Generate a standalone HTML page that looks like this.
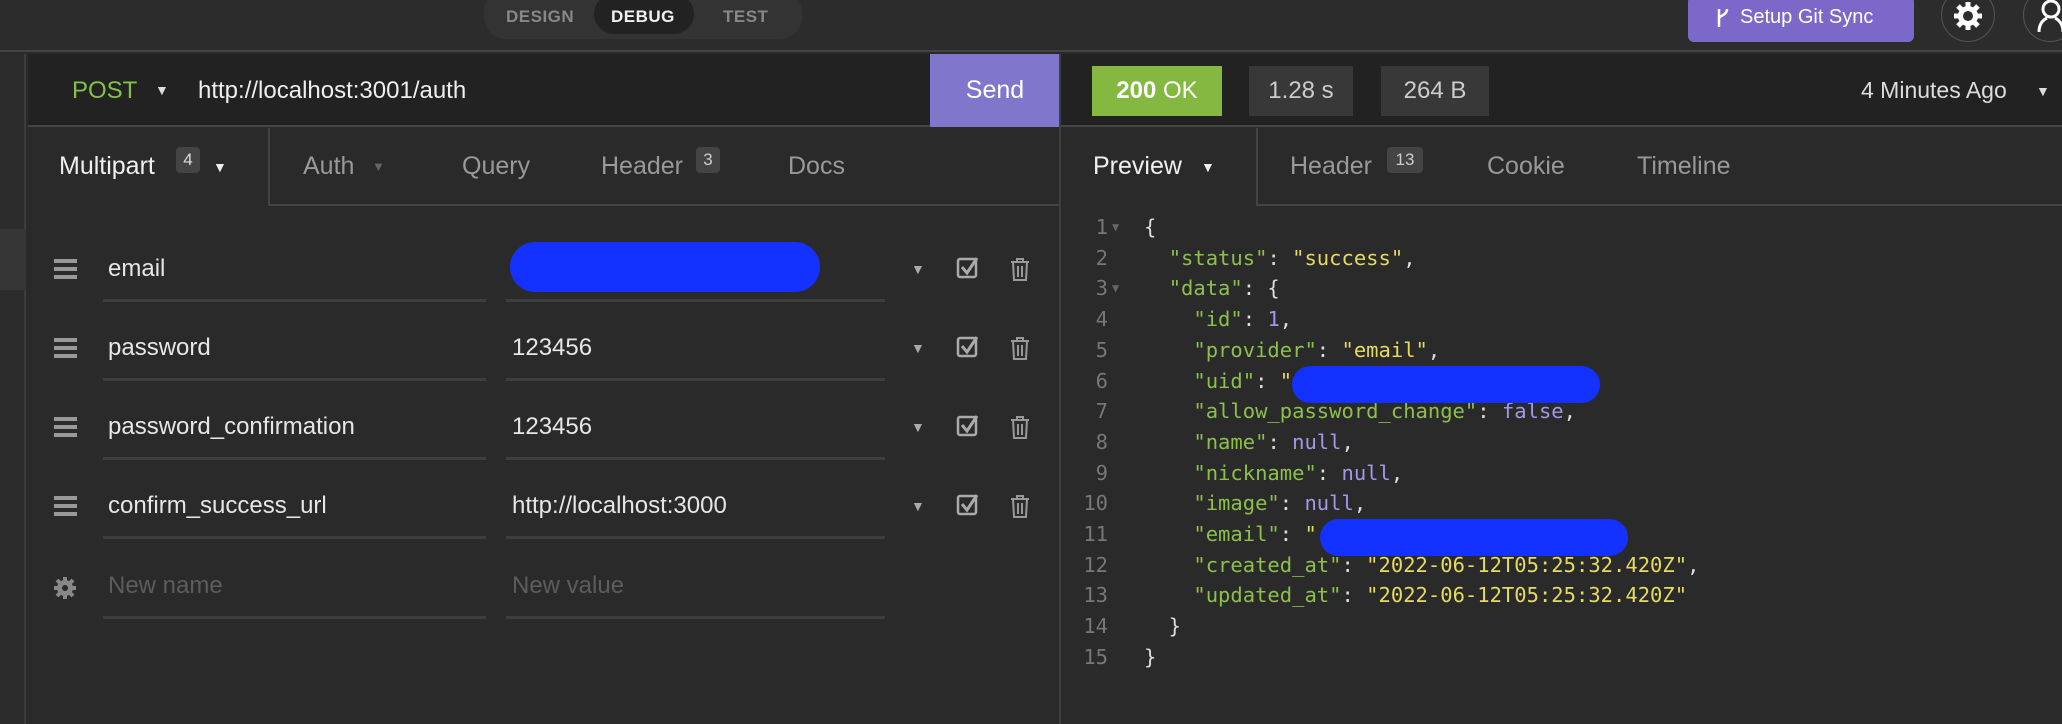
<!DOCTYPE html>
<html><head><meta charset="utf-8"><style>
*{box-sizing:border-box;margin:0;padding:0}
body{width:2062px;height:724px;background:#2a2a2a;font-family:"Liberation Sans",sans-serif;color:#ddd;position:relative;overflow:hidden}
.a{position:absolute}
.top{left:0;top:0;width:2062px;height:52px;background:#2c2c2c;border-bottom:2px solid #444}
.pill{left:484px;top:-10px;width:318px;height:49px;background:#333;border-radius:22px}
.pt{font-size:17px;font-weight:bold;color:#888;top:7px;letter-spacing:.5px}
.mono{font-family:"DejaVu Sans Mono","Liberation Mono",monospace}
.tabtxt{font-size:25px;color:#999;top:152px}
.lbl{font-size:24px;color:#e6e6e6}
.ul{height:3px;background:#3e3e3e}
.k{color:#8cc04a}.s{color:#e5db62}.n{color:#a397e6}.p{color:#ddd}
.ln{color:#777;text-align:right;width:40px}
.dd{font-size:14px;color:#aaa;left:911px}
</style></head><body>
<div class="a top"></div>
<div class="a pill"></div>
<div class="a" style="left:594px;top:-6px;width:100px;height:40px;background:#222;border-radius:20px"></div>
<div class="a pt" style="left:506px">DESIGN</div>
<div class="a pt" style="left:611px;color:#f0f0f0">DEBUG</div>
<div class="a pt" style="left:723px">TEST</div>
<div class="a" style="left:1688px;top:-4px;width:226px;height:46px;background:#7c68c8;border-radius:6px;color:#fff;font-size:20px;padding:10px 0 0 30px">
<svg width="14" height="22" style="position:absolute;left:28px;top:11px" viewBox="0 0 14 22"><path d="M3 2v18M3 12c0-4 8-3 8-10" stroke="#fff" stroke-width="2.5" fill="none"/></svg>
<span style="margin-left:22px">Setup Git Sync</span></div>
<div class="a" style="left:1941px;top:-12px;width:54px;height:54px;border:1.5px solid #555;border-radius:50%"></div>
<svg class="a" style="left:1953px;top:1px" width="30" height="30" viewBox="0 0 30 30"><g stroke="#fff" stroke-width="5"><path d="M15 1v28M1 15h28M5 5l20 20M25 5L5 25"/></g><circle cx="15" cy="15" r="10" fill="#fff"/><circle cx="15" cy="15" r="5" fill="#2c2c2c"/></svg>
<div class="a" style="left:2023px;top:-12px;width:54px;height:54px;border:1.5px solid #555;border-radius:50%"></div>
<svg class="a" style="left:2036px;top:0" width="30" height="32" viewBox="0 0 30 32"><circle cx="15" cy="9" r="8" stroke="#fff" stroke-width="3" fill="none"/><path d="M3 32c0-8 4-12 8-14M27 32c0-8-4-12-8-14" stroke="#fff" stroke-width="3" fill="none"/></svg>

<div class="a" style="left:0;top:54px;width:26px;height:670px;background:#2c2c2c;border-right:2px solid #3c3c3c"></div>
<div class="a" style="left:0;top:229px;width:26px;height:61px;background:#363636"></div>

<div class="a" style="left:28px;top:54px;width:1032px;height:73px;background:#222;border-bottom:2px solid #444"></div>
<div class="a" style="left:72px;top:77px;font-size:24px;color:#86c04a">POST</div>
<div class="a" style="left:155px;top:82px;font-size:14px;color:#ddd">▼</div>
<div class="a" style="left:198px;top:77px;font-size:24px;color:#eee">http://localhost:3001/auth</div>
<div class="a" style="left:930px;top:54px;width:130px;height:73px;background:#8076cc;color:#fff;font-size:25px;text-align:center;line-height:73px">Send</div>
<div class="a" style="left:1059px;top:54px;width:2px;height:670px;background:#3e3e3e"></div>

<div class="a" style="left:268px;top:128px;width:792px;height:78px;border-left:2px solid #444;border-bottom:2px solid #444"></div>
<div class="a tabtxt" style="left:59px;color:#f0f0f0">Multipart</div>
<div class="a" style="left:176px;top:147px;width:24px;height:26px;background:#444;border-radius:4px;font-size:17px;color:#ddd;text-align:center;line-height:26px">4</div>
<div class="a" style="left:213px;top:159px;font-size:14px;color:#eee">▼</div>
<div class="a tabtxt" style="left:303px">Auth</div>
<div class="a" style="left:372px;top:159px;font-size:13px;color:#666">▼</div>
<div class="a tabtxt" style="left:462px">Query</div>
<div class="a tabtxt" style="left:601px">Header</div>
<div class="a" style="left:696px;top:147px;width:24px;height:26px;background:#444;border-radius:4px;font-size:17px;color:#ccc;text-align:center;line-height:26px">3</div>
<div class="a tabtxt" style="left:788px">Docs</div>

<div class="a" style="left:54px;top:259px;width:23px;height:20px;border-top:4px solid #999;border-bottom:4px solid #999"><div style="margin-top:4px;height:4px;background:#999"></div></div>
<div class="a lbl" style="left:108px;top:255px">email</div>
<div class="a ul" style="left:103px;top:299px;width:383px"></div>
<div class="a" style="left:510px;top:242px;width:310px;height:50px;background:#1432ff;border-radius:25px"></div>
<div class="a ul" style="left:506px;top:299px;width:379px"></div>

<div class="a" style="left:54px;top:338px;width:23px;height:20px;border-top:4px solid #999;border-bottom:4px solid #999"><div style="margin-top:4px;height:4px;background:#999"></div></div>
<div class="a lbl" style="left:108px;top:334px">password</div>
<div class="a ul" style="left:103px;top:378px;width:383px"></div>
<div class="a lbl" style="left:512px;top:334px">123456</div>
<div class="a ul" style="left:506px;top:378px;width:379px"></div>

<div class="a" style="left:54px;top:417px;width:23px;height:20px;border-top:4px solid #999;border-bottom:4px solid #999"><div style="margin-top:4px;height:4px;background:#999"></div></div>
<div class="a lbl" style="left:108px;top:413px">password_confirmation</div>
<div class="a ul" style="left:103px;top:457px;width:383px"></div>
<div class="a lbl" style="left:512px;top:413px">123456</div>
<div class="a ul" style="left:506px;top:457px;width:379px"></div>

<div class="a" style="left:54px;top:496px;width:23px;height:20px;border-top:4px solid #999;border-bottom:4px solid #999"><div style="margin-top:4px;height:4px;background:#999"></div></div>
<div class="a lbl" style="left:108px;top:492px">confirm_success_url</div>
<div class="a ul" style="left:103px;top:536px;width:383px"></div>
<div class="a lbl" style="left:512px;top:492px">http://localhost:3000</div>
<div class="a ul" style="left:506px;top:536px;width:379px"></div>

<div class="a dd" style="top:261px">▼</div>
<div class="a dd" style="top:340px">▼</div>
<div class="a dd" style="top:419px">▼</div>
<div class="a dd" style="top:498px">▼</div>
<svg class="a" style="left:955px;top:256px" width="28" height="280" viewBox="0 0 28 280">
<g stroke="#aaa" stroke-width="2.5" fill="none">
<g id="c"><rect x="3" y="3" width="18" height="18" rx="2"/><path d="M7 11l5 6 10-15" stroke-width="3"/></g>
<use href="#c" y="79"/><use href="#c" y="158"/><use href="#c" y="237"/></g></svg>
<svg class="a" style="left:1008px;top:256px" width="24" height="290" viewBox="0 0 24 290">
<g stroke="#999" stroke-width="2" fill="none">
<g id="t"><path d="M3 6h18M9 6V3h6v3M5 6l1 18h12l1-18M10 10v11M14 10v11"/></g>
<use href="#t" y="79"/><use href="#t" y="158"/><use href="#t" y="237"/></g></svg>

<svg class="a" style="left:53px;top:576px" width="24" height="24" viewBox="0 0 24 24"><g stroke="#888" stroke-width="4"><path d="M12 1v22M1 12h22M4 4l16 16M20 4L4 20"/></g><circle cx="12" cy="12" r="8" fill="#888"/><circle cx="12" cy="12" r="3" fill="#2a2a2a"/></svg>
<div class="a lbl" style="left:108px;top:572px;color:#5c5c5c">New name</div>
<div class="a ul" style="left:103px;top:616px;width:383px"></div>
<div class="a lbl" style="left:512px;top:572px;color:#5c5c5c">New value</div>
<div class="a ul" style="left:506px;top:616px;width:379px"></div>

<div class="a" style="left:1061px;top:54px;width:1001px;height:73px;background:#222;border-bottom:2px solid #444"></div>
<div class="a" style="left:1092px;top:66px;width:130px;height:50px;background:#84b840;color:#fff;font-size:24px;font-weight:bold;text-align:center;line-height:50px">200 <span style="font-weight:normal">OK</span></div>
<div class="a" style="left:1249px;top:66px;width:104px;height:50px;background:#383838;color:#ccc;font-size:24px;text-align:center;line-height:50px">1.28 s</div>
<div class="a" style="left:1381px;top:66px;width:108px;height:50px;background:#383838;color:#ccc;font-size:24px;text-align:center;line-height:50px">264 B</div>
<div class="a" style="left:1861px;top:77px;font-size:23px;color:#ddd">4 Minutes Ago</div>
<div class="a" style="left:2036px;top:83px;font-size:14px;color:#ddd">▼</div>

<div class="a" style="left:1256px;top:128px;width:806px;height:78px;border-left:2px solid #444;border-bottom:2px solid #444"></div>
<div class="a tabtxt" style="left:1093px;color:#f0f0f0">Preview</div>
<div class="a" style="left:1201px;top:159px;font-size:14px;color:#eee">▼</div>
<div class="a tabtxt" style="left:1290px">Header</div>
<div class="a" style="left:1387px;top:147px;width:36px;height:26px;background:#444;border-radius:4px;font-size:17px;color:#ccc;text-align:center;line-height:26px">13</div>
<div class="a tabtxt" style="left:1487px">Cookie</div>
<div class="a tabtxt" style="left:1637px">Timeline</div>

<div class="a mono" style="left:1068px;top:212px;font-size:20.5px;line-height:30.7px;white-space:pre"><div style="display:flex"><div class="ln">1<br>2<br>3<br>4<br>5<br>6<br>7<br>8<br>9<br>10<br>11<br>12<br>13<br>14<br>15</div><div style="width:36px;color:#666;font-size:12px;line-height:30.7px;padding-left:4px">▼<br><br>▼</div><div class="p">{
  <span class="k">"status"</span>: <span class="s">"success"</span>,
  <span class="k">"data"</span>: {
    <span class="k">"id"</span>: <span class="n">1</span>,
    <span class="k">"provider"</span>: <span class="s">"email"</span>,
    <span class="k">"uid"</span>: <span class="s">"</span>
    <span class="k">"allow_password_change"</span>: <span class="n">false</span>,
    <span class="k">"name"</span>: <span class="n">null</span>,
    <span class="k">"nickname"</span>: <span class="n">null</span>,
    <span class="k">"image"</span>: <span class="n">null</span>,
    <span class="k">"email"</span>: <span class="s">"</span>
    <span class="k">"created_at"</span>: <span class="s">"2022-06-12T05:25:32.420Z"</span>,
    <span class="k">"updated_at"</span>: <span class="s">"2022-06-12T05:25:32.420Z"</span>
  }
}</div></div></div>
<div class="a" style="left:1292px;top:366px;width:308px;height:37px;background:#1432ff;border-radius:19px"></div>
<div class="a" style="left:1320px;top:519px;width:308px;height:37px;background:#1432ff;border-radius:19px"></div>
</body></html>
